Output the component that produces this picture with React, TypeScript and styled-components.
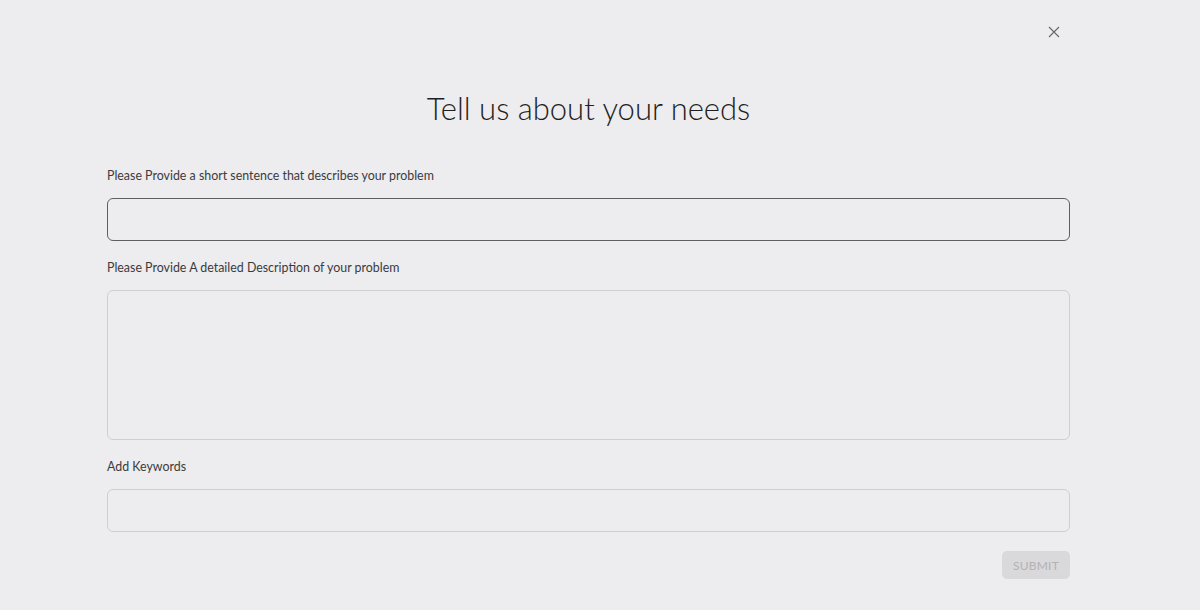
import styled, { createGlobalStyle } from 'styled-components'

const GlobalStyle = createGlobalStyle`
  html, body {
    margin: 0;
    background: #edecee;
    font-family: 'Lato', 'Liberation Sans', sans-serif;
  }
`

const App = () => {
  return (
    <>
      <GlobalStyle />
      <Page>
        <CloseRow>
          <CloseButton aria-label="close">
            <svg width="12" height="12" viewBox="0 0 12 12">
              <path d="M1 1 L11 11 M11 1 L1 11" stroke="#6a6a6c" strokeWidth="1.2" fill="none" />
            </svg>
          </CloseButton>
        </CloseRow>
        <Title>Tell us about your needs</Title>
        <Form>
          <Field>
            <Label>Please Provide a short sentence that describes your problem</Label>
            <Input $focused />
          </Field>
          <Field>
            <Label>Please Provide A detailed Description of your problem</Label>
            <TextArea />
          </Field>
          <Field>
            <Label>Add Keywords</Label>
            <Input />
          </Field>
          <Actions>
            <SubmitButton disabled>SUBMIT</SubmitButton>
          </Actions>
        </Form>
      </Page>
    </>
  )
}

export default App

const Page = styled.div`
  width: 963px;
  margin-left: 107px;
  padding-top: 24px;
`
const CloseRow = styled.div`
  display: flex;
  justify-content: flex-end;
  padding-right: 8px;
`
const CloseButton = styled.button`
  width: 16px;
  height: 16px;
  padding: 0;
  border: none;
  background: none;
  display: flex;
  align-items: center;
  justify-content: center;
  cursor: pointer;
`
const Title = styled.h1`
  margin: 48px 0 0;
  font-size: 31px;
  line-height: 40px;
  font-weight: 300;
  color: #1f1f21;
  text-align: center;
`
const Form = styled.form`
  margin-top: 39px;
  display: flex;
  flex-direction: column;
  gap: 18px;
`
const Field = styled.div`
  display: flex;
  flex-direction: column;
  gap: 13px;
`
const Label = styled.label`
  font-size: 12.4px;
  line-height: 18px;
  color: #3b3b3d;
`
const Input = styled.input<{ $focused?: boolean }>`
  display: block;
  box-sizing: border-box;
  height: 43px;
  flex: 0 0 43px;
  width: 100%;
  margin: 0;
  border: 1px solid ${p => (p.$focused ? '#5f5f61' : '#cfcfd1')};
  border-radius: 6px;
  background: transparent;
  outline: none;
`
const TextArea = styled.textarea`
  display: block;
  box-sizing: border-box;
  height: 150px;
  flex: 0 0 150px;
  width: 100%;
  margin: 0;
  border: 1px solid #cfcfd1;
  border-radius: 6px;
  background: transparent;
  resize: none;
  outline: none;
`
const Actions = styled.div`
  display: flex;
  justify-content: flex-end;
  margin-top: 1px;
`
const SubmitButton = styled.button`
  width: 68px;
  height: 28px;
  border: none;
  border-radius: 5px;
  background: #d9d8da;
  color: #b3b3b5;
  font-family: 'Lato', 'Liberation Sans', sans-serif;
  font-size: 12px;
  letter-spacing: 0.2px;
`
